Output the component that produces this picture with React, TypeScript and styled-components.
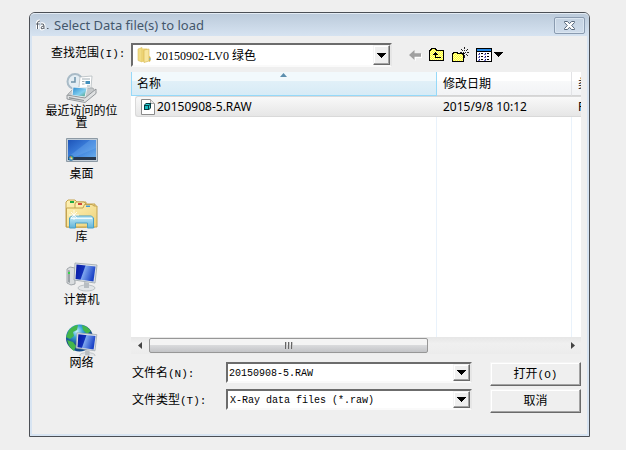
import React from "react";
import styled, { createGlobalStyle } from "styled-components";

const GlobalStyle = createGlobalStyle`
  *, *::before, *::after { box-sizing: border-box; }
  body {
    margin: 0;
    background: #efefef;
    color: #000;
    font: 12px/16px "Noto Sans", "Noto Sans CJK SC", sans-serif;
  }
  button, input, select { font: inherit; color: inherit; margin: 0; padding: 0; border-radius: 0; }
  button { cursor: default; }
`;

const Page = styled.div`
  display: flex;
  min-height: 100vh;
  padding: 12px 36px 13px 29px;
`;

const Dialog = styled.section`
  flex: 1;
  min-width: 0;
  display: flex;
  flex-direction: column;
  border: 1px solid #4b4f55;
  border-radius: 6px 6px 0 0;
  background: #d7e4f2;
  padding: 0 2px 2px;
`;

const TitleBar = styled.header`
  display: flex;
  align-items: center;
  gap: 5px;
  height: 23px;
  margin: 0 -2px;
  padding: 0 4px 0 6px;
  border-radius: 5px 5px 0 0;
  border-top: 1px solid #e4ecf4;
  background: linear-gradient(#bccbdb, #d6e3f1);
`;

const Title = styled.h1`
  flex: 1;
  margin: 0;
  font: 13px/16px "Noto Sans", sans-serif;
  color: #44576c;
`;

const CloseButton = styled.button`
  display: grid;
  place-items: center;
  width: 31px;
  height: 17px;
  border: 1px solid #8a9bb0;
  border-radius: 2px;
  background: linear-gradient(#c5d3e2, #cfdceb);
  box-shadow: inset 0 0 0 1px #dbe6f1;
`;

const Body = styled.div`
  flex: 1;
  display: grid;
  grid-template-columns: 99px minmax(0, 1fr);
  grid-template-rows: 36px minmax(200px, 1fr) auto;
  padding: 0 6px 21px 0;
  background: #efefef;
`;

const LookInLabel = styled.label`
  padding: 9px 0 0 19px;
  white-space: nowrap;
`;

const Latin = styled.span`
  font: 11px/16px "Liberation Mono", monospace;
`;

const LookInRow = styled.div`
  display: flex;
  align-items: center;
  padding-top: 2px;
  gap: 17px;
`;

const Field = styled.div<{ $tall?: boolean }>`
  position: relative;
  display: flex;
  align-items: stretch;
  min-width: 0;
  height: ${(p) => (p.$tall ? 24 : 21)}px;
  border: 2px solid;
  border-color: #6c6c6c #e6e6e6 #fafafa #6c6c6c;
  background: #fff;
`;

const LookInField = styled(Field)`
  flex: 0 1 261px;
  align-items: center;
  padding-left: 4px;
`;

const Select = styled.select<{ $serif?: boolean }>`
  appearance: none;
  flex: 1;
  min-width: 0;
  align-self: stretch;
  border: 0;
  outline: 0;
  background: transparent;
  padding: 2px 20px 0 ${(p) => (p.$serif ? 4 : 2)}px;
  font: ${(p) =>
    p.$serif
      ? '12px/16px "Liberation Serif", "Noto Sans CJK SC", serif'
      : '10px/16px "Liberation Mono", monospace'};
`;

const TextInput = styled.input`
  flex: 1;
  min-width: 0;
  border: 0;
  outline: 0;
  background: transparent;
  padding: 2px 1px 0;
  font: 10px/16px "Liberation Mono", monospace;
`;

const raised = `
  border: 1px solid;
  border-color: #f4f4f4 #6a6a6a #6a6a6a #f4f4f4;
  box-shadow: inset -1px -1px 0 #a3a3a3, inset 1px 1px 0 #fff;
  background: #efefef;
`;

const DropButton = styled.button`
  display: grid;
  place-items: center;
  width: 17px;
  ${raised}
`;

const DropMark = styled.span`
  position: absolute;
  inset: 0 0 0 auto;
  display: grid;
  place-items: center;
  width: 17px;
  pointer-events: none;
  ${raised}
`;

const Tools = styled.div`
  display: flex;
  align-items: center;
  gap: 7px;
`;

const ToolButton = styled.button`
  display: flex;
  align-items: center;
  border: 0;
  background: none;
`;

const Places = styled.nav`
  grid-row: 2 / span 2;
  display: flex;
  flex-direction: column;
  align-items: center;
`;

const Place = styled.button`
  display: flex;
  flex-direction: column;
  align-items: center;
  width: 76px;
  height: 63px;
  border: 0;
  background: none;
  line-height: 12px;
  svg { flex: none; margin-bottom: 1px; }
`;

const FileView = styled.div`
  display: flex;
  flex-direction: column;
  overflow: hidden;
`;

const ListPane = styled.div`
  flex: 1;
  overflow: hidden;
  background: #fff;
`;

const FileTable = styled.table`
  width: calc(100% + 60px);
  height: 100%;
  table-layout: fixed;
  border-collapse: separate;
  border-spacing: 0;
`;

const HeadCell = styled.th<{ $sorted?: boolean }>`
  position: relative;
  height: 24px;
  padding: 0 6px 0 ${(p) => (p.$sorted ? 5 : 6)}px;
  text-align: left;
  font-weight: 400;
  border-right: 1px solid ${(p) => (p.$sorted ? "#96d9f9" : "#e2e3e6")};
  border-left: ${(p) => (p.$sorted ? "1px solid #96d9f9" : "0")};
  border-bottom: 1px solid ${(p) => (p.$sorted ? "#96d9f9" : "#d5d5d5")};
  background: ${(p) =>
    p.$sorted
      ? "linear-gradient(#f2f9fc 0 40%, #e1f0f8 40%, #d7ebf6)"
      : "linear-gradient(#fff 0 40%, #f8f9fa 40%, #f2f3f5)"};
`;

const SortMark = styled.svg`
  position: absolute;
  top: 1px;
  left: calc(50% - 4px);
`;

const Cell = styled.td`
  height: 22px;
  padding: 0;
  vertical-align: top;
  border-right: 1px solid #e9f2fb;
`;

const CellBox = styled.div<{ $first?: boolean }>`
  display: flex;
  align-items: center;
  gap: 2px;
  height: 21px;
  padding-left: ${(p) => (p.$first ? 5 : 6)}px;
  margin: 0 -1px 0 ${(p) => (p.$first ? 4 : 0)}px;
  border: 1px solid #d9d9d9;
  border-width: 1px 0 1px ${(p) => (p.$first ? 1 : 0)}px;
  border-radius: ${(p) => (p.$first ? "3px 0 0 3px" : "0")};
  background: linear-gradient(#f9f9f9, #e6e6e6);
  white-space: nowrap;
`;

const EmptyCell = styled.td`
  border-right: 1px solid #e9f2fb;
`;

const ScrollBar = styled.div`
  display: grid;
  grid-template-columns: 18px 279fr 136fr 17px;
  height: 17px;
  background: linear-gradient(#e6e6e6, #f0f0f0 40%, #ececec);
`;

const ScrollButton = styled.button`
  display: grid;
  place-items: center;
  border: 0;
  background: none;
`;

const Thumb = styled.div`
  display: grid;
  place-items: center;
  margin: 1px 0;
  border: 1px solid #979797;
  border-radius: 2px;
  background: linear-gradient(#f4f4f4 0 45%, #d9dadc 50%, #c3c4c7);
`;

const Form = styled.form`
  grid-column: 2;
  display: grid;
  grid-template-columns: 95px minmax(0, 1fr) 91px;
  grid-auto-rows: 24px;
  row-gap: 3px;
  margin-top: 8px;
`;

const FormLabel = styled.label`
  padding: 3px 0 0 1px;
  white-space: nowrap;
`;

const FormField = styled(Field)`
  margin-right: 18px;
`;

const PushButton = styled.button`
  ${raised}
`;

const Triangle = () => (
  <svg width="9" height="5" viewBox="0 0 9 5" shapeRendering="crispEdges">
    <path d="M0 0h9L4.5 5z" fill="#000" />
  </svg>
);

const AppIcon = () => (
  <svg width="13" height="12" viewBox="0 0 13 12" fill="none">
    <path d="M1.500 10V4q0-2 2.500-2M5 5q3-1 3 2v3M8 7q-3 0-3 2t3 0" stroke="#fff" strokeWidth="3" />
    <path d="M1.500 10V4q0-2 2.500-2M0 5h3.500M5 5q3-1 3 2v3M8 7q-3 0-3 2t3 0M11 9.500h1.500" stroke="#59616a" />
  </svg>
);

const CloseIcon = () => (
  <svg width="11" height="9" viewBox="0 0 11 9">
    <path d="M.5.500h3l2 2.200 2-2.200h3v1L7.700 4.500l2.800 3v1h-3l-2-2.200-2 2.200h-3v-1l2.800-3L.5 1.500z" fill="#fff" stroke="#59687b" />
  </svg>
);

const FolderIcon = () => (
  <svg width="15" height="16" viewBox="0 0 15 16">
    <path d="M1 2l4-1.500V15L1 13.500z" fill="#f1dc83" stroke="#dcc05f" strokeWidth=".6" />
    <path d="M5 1.500h5l1 1V14l-6 1z" fill="#edd373" />
    <path d="M7 3l5-1v12l-5 1.500z" fill="#f8e69d" stroke="#d3b34e" strokeWidth=".6" />
    <path d="M12 9l1.500 1v4l-1.500 1z" fill="#d9b84c" />
    <path d="M12.500 11h1v2h-1z" fill="#6db2dd" />
  </svg>
);

const BackIcon = () => (
  <svg width="13" height="12" viewBox="0 0 13 12">
    <path d="M2 7l5 5V9h6V5" fill="#fff" />
    <path d="M0 6l5.500-5v3.200H12v3.600H5.500V11z" fill="#a0a0a0" />
  </svg>
);

const Dither = ({ id }: { id: string }) => (
  <pattern id={id} width="2" height="2" patternUnits="userSpaceOnUse">
    <path d="M0 0h2v2H0z" fill="#ffffa8" />
    <path d="M0 0h1v1H0zM1 1h1v1H1z" fill="#ffff30" />
  </pattern>
);

const UpIcon = () => (
  <svg width="16" height="14" viewBox="0 0 16 14" shapeRendering="crispEdges">
    <defs><Dither id="up" /></defs>
    <path d="M.5 12.500v-10h1v-1h1v-1h4v1h1v1h7v10z" fill="url(#up)" stroke="#000" />
    <path d="M6 4h1v1h1v1h1v1H7v2h5v1H6V7H4V6h1V5h1z" fill="#000" />
  </svg>
);

const NewFolderIcon = () => (
  <svg width="17" height="16" viewBox="0 0 17 16" shapeRendering="crispEdges">
    <defs><Dither id="new" /></defs>
    <path d="M.5 14.500v-8h1v-1h4v1h6v8z" fill="url(#new)" stroke="#000" />
    <path d="M12 0h1v2h-1zM12 8h1v3h-1zM8 5h2v1H8zM15 5h2v1h-2zM9 2h1v1H9zM10 3h1v1h-1zM15 2h1v1h-1zM14 3h1v1h-1zM10 7h1v1h-1zM14 7h1v1h-1zM15 8h1v1h-1zM12 3h1v1h-1zM12 6h1v1h-1zM11 5h1v1h-1zM13 5h1v1h-1z" fill="#222" />
  </svg>
);

const ViewIcon = () => (
  <svg width="27" height="14" viewBox="0 0 27 14" shapeRendering="crispEdges">
    <path d="M.5.500h15v13H.5z" fill="#fff" stroke="#000" />
    <path d="M1 1h14v2H1z" fill="#2489e8" />
    <path d="M1 3h14v1H1z" fill="#000" />
    {[5, 8, 11].map((y) => (
      <React.Fragment key={y}>
        <path d={`M3 ${y}h1v1H3zM9 ${y}h1v1H9z`} fill="#15157d" />
        <path d={`M2 ${y + 1}h2v1H2zM8 ${y + 1}h2v1H8z`} fill="#7474c4" />
        <path d={`M5 ${y}h2v1H5zM11 ${y}h2v1h-2z`} fill="#000" />
      </React.Fragment>
    ))}
    <path d="M18 4h9l-4.500 5z" fill="#000" />
  </svg>
);

const RawFileIcon = () => (
  <svg width="14" height="16" viewBox="0 0 14 16">
    <path d="M.5.500h9l4 4v11H.5z" fill="#fff" stroke="#8b8b8b" />
    <path d="M9.500.500v4h4" fill="#e6e6e6" stroke="#a5a5a5" />
    <path d="M3 6l2-2h5v5l-2 2H3z" fill="#063b42" />
    <path d="M4 7h3v3H4z" fill="#17b8bd" />
    <path d="M4 6l1-1h4L8 6zM8 7l1-1v3l-1 1z" fill="#2ad0d2" />
  </svg>
);

const RecentIcon = () => (
  <svg width="34" height="32" viewBox="0 0 34 32">
    <defs>
      <linearGradient id="photo" x2="1" y2="1"><stop stopColor="#2787cf" /><stop offset=".6" stopColor="#83d0ef" /><stop offset="1" stopColor="#4d9c6c" /></linearGradient>
    </defs>
    <circle cx="10" cy="9.500" r="7.500" fill="#e3edf3" stroke="#a9bbc7" strokeWidth="2" />
    <path d="M10 5v5H6" fill="none" stroke="#6d93aa" strokeWidth="1.500" />
    <path d="M15 5l12-1-1.500 17-12-1z" fill="#fff" stroke="#aab3b8" strokeWidth=".7" />
    <path d="M17 7h8M17 9.500h2.500M17 12h2.500M22 14h3" stroke="#a0adb4" />
    <path d="M20.500 9h4.500v3h-4.500z" fill="#428fbc" />
    <path d="M3 22l6-6h19l3 5-9 6H3z" fill="#c6c9cb" stroke="#999ea1" strokeWidth=".7" />
    <path d="M8 15l14 1-2 9-13-1.500z" fill="url(#photo)" stroke="#eef3f5" />
    <path d="M2 23l18 3 11-9v4.500L20 30.500 2 27z" fill="#dfe1e2" stroke="#82878a" strokeWidth=".8" />
    <path d="M4 25l15 3v1L4 26.500z" fill="#8e9497" />
  </svg>
);

const DesktopIcon = () => (
  <svg width="32" height="32" viewBox="0 0 32 32">
    <defs>
      <linearGradient id="desk" x2="1" y2="1"><stop stopColor="#1d54b8" /><stop offset=".5" stopColor="#3e82de" /><stop offset="1" stopColor="#6fb3ed" /></linearGradient>
    </defs>
    <path d="M.5 3.500h31v23H.5z" fill="#c3ced8" stroke="#8d9aa5" />
    <path d="M2 5h28v20H2z" fill="url(#desk)" />
    <path d="M2 22L24 5h6v8L9 22z" fill="#8dc5f5" opacity=".25" />
    <path d="M2 22h28v3H2z" fill="#27384e" />
    <circle cx="5" cy="23" r="2.800" fill="#1c6ca4" />
    <path d="M3.500 21.500H5V23H3.500z" fill="#ee8157" /><path d="M5 21.500h1.500V23H5z" fill="#8ed369" />
    <path d="M3.500 23H5v1.500H3.500z" fill="#76c9fa" /><path d="M5 23h1.500v1.500H5z" fill="#ffe46b" />
  </svg>
);

const LibraryIcon = () => (
  <svg width="34" height="32" viewBox="0 0 34 32">
    <defs>
      <linearGradient id="lib" x2="1" y2="1"><stop stopColor="#fff3b7" /><stop offset="1" stopColor="#ecd078" /></linearGradient>
      <linearGradient id="glass" x2="0" y2="1"><stop stopColor="#c7edf8" /><stop offset="1" stopColor="#62b3d7" /></linearGradient>
    </defs>
    <path d="M1 29V4l2-2h7l2 2h9v25z" fill="url(#lib)" stroke="#c4a34e" />
    <path d="M5 3h4v2H5z" fill="#20aa45" />
    <path d="M10 29V6l1-2h8l2 2h9v23z" fill="url(#lib)" stroke="#c4a34e" />
    <path d="M13 5h4v2h-4z" fill="#d04a3d" />
    <path d="M1.500 29V10H18l1.500-3.500H27L29 8h3v21z" fill="url(#lib)" stroke="#c4a34e" />
    <path d="M21 7.500h4v1.500h-4z" fill="#3c99d3" />
    <path d="M4.500 20l2-2h20l2 2v10h-6v-5h-12v5h-6z" fill="url(#glass)" stroke="#4aa0c6" />
    <path d="M6 20.500h21" stroke="#ecfaff" />
    <path d="M9 12v10M4 17h10M6 14l6 6M12 14l-6 6" stroke="#fff" strokeWidth=".8" />
  </svg>
);

const Monitor = ({ id }: { id: string }) => (
  <g>
    <defs>
      <linearGradient id={id} x2="1" y2=".3"><stop stopColor="#0715a1" /><stop offset=".45" stopColor="#1230b8" /><stop offset=".5" stopColor="#7ea6ee" /><stop offset="1" stopColor="#1c44c8" /></linearGradient>
    </defs>
    <ellipse cx="21.500" cy="27" rx="8.500" ry="3" fill="#e3e6e8" stroke="#a9b0b5" strokeWidth=".7" />
    <path d="M19 21l5 1v5h-5z" fill="#b8bec3" />
    <path d="M10 2l22 2-2 18-21-3z" fill="#dfe4e8" stroke="#9aa4ab" strokeWidth=".8" />
    <path d="M11.500 3.500L30.500 5.500 28.500 20.500 10.500 18z" fill={`url(#${id})`} />
  </g>
);

const ComputerIcon = () => (
  <svg width="34" height="32" viewBox="0 0 34 32">
    <path d="M2 8l3-2 5 1v16l-4 1-4-2z" fill="#dadddf" stroke="#8f969a" strokeWidth=".8" />
    <path d="M3 9l2 .5V22l-2-1z" fill="#9aa1a5" />
    <path d="M3 11h2v2H3z" fill="#37d44b" />
    <Monitor id="pc" />
  </svg>
);

const NetworkIcon = () => (
  <svg width="34" height="32" viewBox="0 0 34 32">
    <defs>
      <radialGradient id="globe" cx=".4" cy=".25"><stop stopColor="#c6f0fb" /><stop offset=".45" stopColor="#37a2d6" /><stop offset="1" stopColor="#134b8b" /></radialGradient>
    </defs>
    <circle cx="14.500" cy="14" r="13.500" fill="url(#globe)" />
    <path d="M4 6q5-5 9-5l-1 5-4 2 1 4-4 3-4-2zM2 16l6 2 3 4-2 5q-5-3-7-11zM17 1l5 2 4 4-4 3-4-4z" fill="#43b64b" />
    <g transform="translate(3 7) scale(.9)"><Monitor id="net" /></g>
  </svg>
);

const places = [
  { name: "最近访问的位置", icon: <RecentIcon /> },
  { name: "桌面", icon: <DesktopIcon /> },
  { name: "库", icon: <LibraryIcon /> },
  { name: "计算机", icon: <ComputerIcon /> },
  { name: "网络", icon: <NetworkIcon /> },
];

export default function App() {
  return (
    <>
      <GlobalStyle />
      <Page>
        <Dialog role="dialog" aria-labelledby="title">
          <TitleBar>
            <AppIcon />
            <Title id="title">Select Data file(s) to load</Title>
            <CloseButton aria-label="Close"><CloseIcon /></CloseButton>
          </TitleBar>
          <Body>
            <LookInLabel htmlFor="look-in">查找范围<Latin>(I):</Latin></LookInLabel>
            <LookInRow>
              <LookInField $tall>
                <FolderIcon />
                <Select id="look-in" $serif>
                  <option>20150902-LV0 绿色</option>
                </Select>
                <DropMark><Triangle /></DropMark>
              </LookInField>
              <Tools>
                <ToolButton aria-label="Back"><BackIcon /></ToolButton>
                <ToolButton aria-label="Up one level"><UpIcon /></ToolButton>
                <ToolButton aria-label="New folder"><NewFolderIcon /></ToolButton>
                <ToolButton aria-label="View"><ViewIcon /></ToolButton>
              </Tools>
            </LookInRow>
            <Places>
              {places.map((p) => (
                <Place key={p.name}>{p.icon}{p.name}</Place>
              ))}
            </Places>
            <FileView>
              <ListPane>
                <FileTable>
                  <colgroup>
                    <col width="60%" />
                    <col width="135" />
                    <col />
                  </colgroup>
                  <thead>
                    <tr>
                      <HeadCell $sorted aria-sort="ascending">
                        名称
                        <SortMark width="7" height="4" viewBox="0 0 7 4">
                          <path d="M3.500 0L7 4H0z" fill="#5d8fae" />
                        </SortMark>
                      </HeadCell>
                      <HeadCell>修改日期</HeadCell>
                      <HeadCell>类型</HeadCell>
                    </tr>
                  </thead>
                  <tbody>
                    <tr>
                      <Cell><CellBox $first><RawFileIcon />20150908-5.RAW</CellBox></Cell>
                      <Cell><CellBox>2015/9/8 10:12</CellBox></Cell>
                      <Cell><CellBox>RAW</CellBox></Cell>
                    </tr>
                    <tr>
                      <EmptyCell /><EmptyCell /><EmptyCell />
                    </tr>
                  </tbody>
                </FileTable>
              </ListPane>
              <ScrollBar>
                <ScrollButton aria-label="Scroll left">
                  <svg width="4" height="7" viewBox="0 0 4 7"><path d="M4 0v7L0 3.500z" fill="#444" /></svg>
                </ScrollButton>
                <Thumb>
                  <svg width="8" height="7" viewBox="0 0 8 7" shapeRendering="crispEdges">
                    <path d="M0 0h1v7H0zM3 0h1v7H3zM6 0h1v7H6z" fill="#666" />
                    <path d="M1 0h1v7H1zM4 0h1v7H4zM7 0h1v7H7z" fill="#c9c9c9" />
                  </svg>
                </Thumb>
                <span />
                <ScrollButton aria-label="Scroll right">
                  <svg width="4" height="7" viewBox="0 0 4 7"><path d="M0 0v7l4-3.500z" fill="#444" /></svg>
                </ScrollButton>
              </ScrollBar>
            </FileView>
            <Form onSubmit={(e) => e.preventDefault()}>
              <FormLabel htmlFor="file-name">文件名<Latin>(N):</Latin></FormLabel>
              <FormField>
                <TextInput id="file-name" defaultValue="20150908-5.RAW" />
                <DropButton type="button" aria-label="Recent file names"><Triangle /></DropButton>
              </FormField>
              <PushButton type="submit">打开<Latin>(O)</Latin></PushButton>
              <FormLabel htmlFor="file-type">文件类型<Latin>(T):</Latin></FormLabel>
              <FormField>
                <Select id="file-type">
                  <option>X-Ray data files (*.raw)</option>
                </Select>
                <DropMark><Triangle /></DropMark>
              </FormField>
              <PushButton type="button">取消</PushButton>
            </Form>
          </Body>
        </Dialog>
      </Page>
    </>
  );
}
